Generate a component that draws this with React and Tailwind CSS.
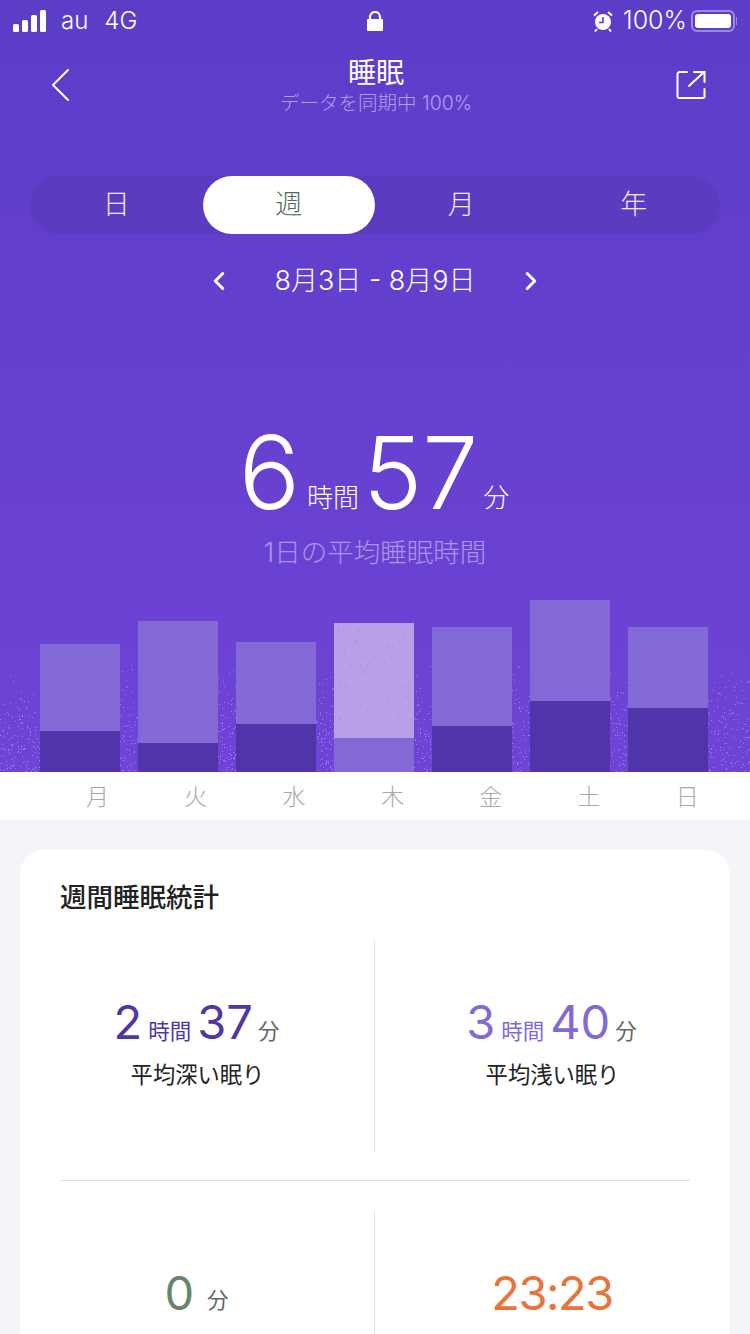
import { ChevronLeft, ChevronRight } from 'lucide-react';

const font = "font-['Inter','Noto_Sans_CJK_JP',sans-serif]";
const tabs = ['日', '週', '月', '年'];
const bars = [
  { day: '月', total: 128, deep: 41 },
  { day: '火', total: 151, deep: 29 },
  { day: '水', total: 130, deep: 48 },
  { day: '木', total: 149, deep: 34, active: true },
  { day: '金', total: 145, deep: 46 },
  { day: '土', total: 172, deep: 71 },
  { day: '日', total: 145, deep: 64 },
];

// speckle texture, lower power means denser toward the bottom
const speckle = (w, h, count, seed, power) => {
  let s = seed;
  const rnd = () => {
    s = (s * 16807) % 2147483647;
    return s / 2147483647;
  };
  const dots = [];
  for (let i = 0; i < count; i++) {
    const y = h * Math.pow(rnd(), power);
    dots.push({ x: Math.floor(rnd() * w), y: Math.floor(y) });
  }
  return dots;
};

const Speckle = ({ w, h, count, seed, power, color, className }) => (
  <svg width={w} height={h} className={className} shapeRendering="crispEdges">
    {speckle(w, h, count, seed, power).map((d, i) => (
      <rect key={i} x={d.x} y={d.y} width="1" height="1" fill={color} />
    ))}
  </svg>
);

const SignalBars = () => (
  <svg width="34" height="22" viewBox="0 0 34 22" fill="white">
    <rect x="0" y="14" width="6" height="8" rx="1.500" />
    <rect x="9" y="10" width="6" height="12" rx="1.500" />
    <rect x="18" y="5" width="6" height="17" rx="1.500" />
    <rect x="27" y="0" width="6" height="22" rx="1.500" />
  </svg>
);

const Lock = () => (
  <svg width="18" height="20" viewBox="0 0 18 20" fill="white">
    <path d="M4 9V6a5 5 0 0 1 10 0v3" fill="none" stroke="white" strokeWidth="2.200" />
    <rect x="1" y="8" width="16" height="12" rx="1" />
  </svg>
);

const Alarm = () => (
  <svg width="20" height="22" viewBox="0 0 20 22" fill="none">
    <circle cx="10" cy="12" r="8" fill="white" />
    <path d="M10 7v5.500H6" stroke="#5a3cc6" strokeWidth="1.600" />
    <path d="M1 5.500 5 2M19 5.500 15 2M4 19l-2 2.500M16 19l2 2.500" stroke="white" strokeWidth="2" />
  </svg>
);

const Battery = () => (
  <div className="flex items-center gap-[1px]">
    <div className="w-[44px] h-[22px] rounded-[6px] border-2 border-[#9c8ae0] p-[2px]">
      <div className="w-full h-full rounded-[3px] bg-white" />
    </div>
    <div className="w-[1px] h-[8px] bg-[#9c8ae0]" />
  </div>
);

const BackIcon = () => (
  <svg width="20" height="34" viewBox="0 0 20 34" fill="none" stroke="white" strokeWidth="2" strokeLinecap="round" strokeLinejoin="round">
    <path d="M18 2 3 17l15 15" />
  </svg>
);

const ShareIcon = () => (
  <svg width="30" height="30" viewBox="0 0 30 30" fill="none" stroke="white" strokeWidth="2" strokeLinecap="round">
    <path d="M11 2H3.500a2 2 0 0 0-2 2V26.500a1.500 1.500 0 0 0 1.500 1.500H27a1.500 1.500 0 0 0 1.500-1.500V19" />
    <path d="M13 16 28 2M18 2h10.500v10" />
  </svg>
);

const Stat = ({ value, unit1, value2, unit2, label, color, tight }) => (
  <div className="flex-1 flex flex-col items-center pt-[53px]">
    <div className={`flex items-baseline ${tight ? '-ml-[1px]' : '-ml-[2px]'}`}>
      <span className={`text-[47px] leading-[58px] ${tight ? 'tracking-[-1.500px]' : ''} ${color}`}>{value}</span>
      {unit1 && <span className={`text-[21.500px] mx-[6px] ${color}`}>{unit1}</span>}
      {value2 && <span className={`text-[47px] leading-[58px] ${color}`}>{value2}</span>}
      {unit2 && <span className={`text-[21.500px] text-[#666] ${unit1 ? 'ml-[5px]' : 'ml-[13px] -translate-y-[2px]'}`}>{unit2}</span>}
    </div>
    {label && <div className="mt-[9px] text-[22.300px] leading-[30px] text-[#222]">{label}</div>}
  </div>
);

export default function App() {
  return (
    <div className={`w-[750px] h-[1334px] overflow-hidden bg-[#f4f5f8] ${font}`}>
      <div className="relative h-[772px] bg-[linear-gradient(180deg,#5b3dc8_0%,#6f43d6_100%)] text-white">
        <div className="flex items-center justify-between h-[42px] px-[13px]">
          <div className="flex items-center w-[240px]">
            <SignalBars />
            <span className="ml-[14px] text-[24px] font-light">au</span>
            <span className="ml-[16px] text-[24px] font-light">4G</span>
          </div>
          <Lock />
          <div className="flex items-center justify-end w-[240px]">
            <Alarm />
            <span className="ml-[10px] mr-[4px] text-[25px] font-light">100%</span>
            <Battery />
          </div>
        </div>

        <div className="flex items-center justify-between h-[86px] pl-[50px] pr-[44px]">
          <div className="w-[26px]"><BackIcon /></div>
          <div className="flex flex-col items-center -mt-[3px]">
            <div className="text-[28px] leading-[38px]">睡眠</div>
            <div className="text-[19.500px] leading-[22px] font-light text-[#b0a0ea]">データを同期中 100%</div>
          </div>
          <div className="w-[30px]"><ShareIcon /></div>
        </div>

        <div className="mx-[30px] mt-[48px] h-[58px] rounded-[29px] bg-[#5b3bbf] flex">
          {tabs.map((t, i) => (
            <div
              key={t}
              className={`w-[172.500px] h-[58px] rounded-[29px] flex items-center justify-center text-[27px] font-light ${i === 1 ? 'bg-white text-[#4f6b58]' : 'text-white/90'}`}
            >
              {t}
            </div>
          ))}
        </div>

        <div className="flex items-center justify-center mt-[24px] h-[46px]">
          <ChevronLeft size={30} strokeWidth={3} absoluteStrokeWidth />
          <span className="mx-[40px] text-[27px] font-light">8月3日 - 8月9日</span>
          <ChevronRight size={30} strokeWidth={3} absoluteStrokeWidth />
        </div>

        <div className="flex items-baseline justify-center mt-[118px] h-[100px] -ml-[2px]">
          <span className="text-[102px] leading-[100px] font-light">6</span>
          <span className="text-[26px] ml-[7px] mr-[4px] font-light -translate-y-[2px]">時間</span>
          <span className="text-[100px] leading-[100px] font-light">57</span>
          <span className="text-[26px] ml-[5px] font-light -translate-y-[2px]">分</span>
        </div>
        <div className="text-center text-[26.500px] leading-[34px] mt-[13px] font-light text-[#a896e8]">1日の平均睡眠時間</div>

        <Speckle w={750} h={112} count={2800} seed={4711} power={0.5} color="#9c80ea" className="absolute left-0 bottom-0" />

        <div className="absolute left-[40px] bottom-0 flex items-end gap-[18px]">
          {bars.map((b) => (
            <div key={b.day} className={`relative w-[80px] flex flex-col justify-end ${b.active ? 'bg-[#b8a0e8]' : 'bg-[#8369d6]'}`} style={{ height: b.total }}>
              {b.active && <Speckle w={70} h={92} count={170} seed={91} power={1.25} color="#a48ce0" className="absolute left-[4px] top-[6px]" />}
              <div className={b.active ? 'bg-[#8369d6]' : 'bg-[#5035aa]'} style={{ height: b.deep }} />
            </div>
          ))}
        </div>
      </div>

      <div className="h-[48px] bg-white flex gap-[18.300px] pl-[57.500px] pt-[10px]">
        {bars.map((b) => (
          <div key={b.day} className="w-[80px] text-center text-[23px] leading-[30px] font-light text-[#a8a8a8]">{b.day}</div>
        ))}
      </div>

      <div className="mx-[20px] mt-[30px] bg-white rounded-t-[24px] pt-[29px] h-[600px]">
        <div className="px-[40px] text-[26.500px] leading-[36px] font-medium text-[#222]">週間睡眠統計</div>
        <div className="flex mt-[25px] h-[212px]">
          <Stat value="2" unit1="時間" value2="37" unit2="分" label="平均深い眠り" color="text-[#4f35a8]" />
          <div className="w-[1px] -ml-[1px] bg-[#e2e2e2]" />
          <Stat value="3" unit1="時間" value2="40" unit2="分" label="平均浅い眠り" color="text-[#8369d6]" />
        </div>
        <div className="h-[1px] bg-[#e2e2e2] mt-[28px] mx-[40px]" />
        <div className="flex mt-[30px] h-[212px]">
          <Stat value="0" unit2="分" color="text-[#678569]" />
          <div className="w-[1px] -ml-[1px] bg-[#e2e2e2]" />
          <Stat value="23:23" tight color="text-[#e8743b]" />
        </div>
      </div>
    </div>
  );
}
